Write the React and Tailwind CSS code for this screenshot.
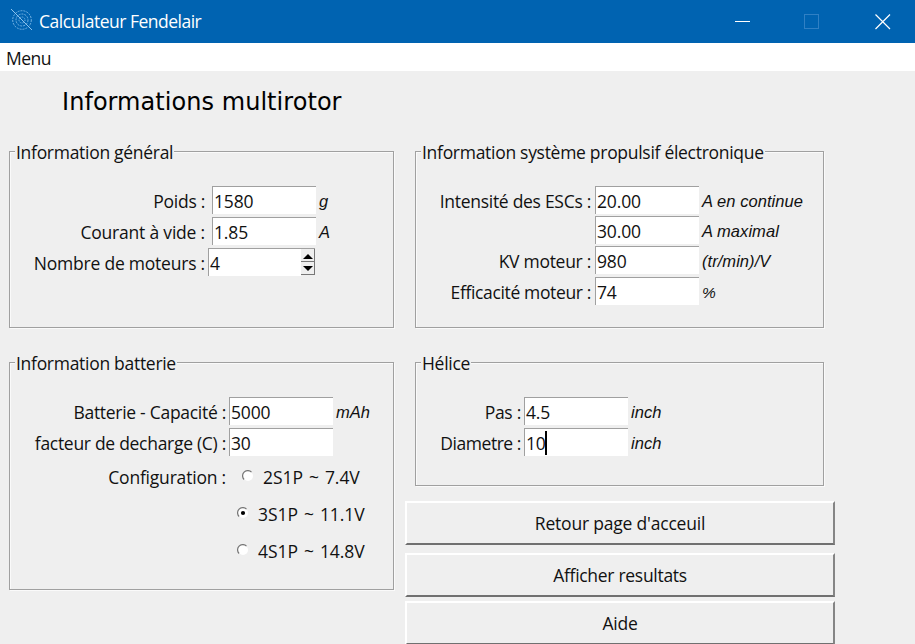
import React from "react";

function Panel({ title, className, children }) {
  return (
    <section className={`flex flex-col border border-[#a0a0a0] shadow-[1px_1px_0_#fafafa,inset_1px_1px_0_#fafafa] ${className}`}>
      <h2 className="-mt-[13px] ml-[5px] h-[26px] self-start whitespace-nowrap bg-[#efefef] px-px leading-[26px]">{title}</h2>
      {children}
    </section>
  );
}

function Label({ width, className = "", children }) {
  return <span className={`shrink-0 whitespace-nowrap text-right ${width} ${className}`}>{children}</span>;
}

function Entry({ value, caret, className = "w-[104px] ml-1" }) {
  return (
    <span className={`flex h-7 shrink-0 items-center border-l border-t border-[#a0a0a0] bg-white pl-[1px] text-[17.5px] tracking-[-0.15px] ${className}`}>
      <span className="pt-px">{value}</span>
      {caret && <i className="-ml-px h-6 w-[2px] bg-black" />}
    </span>
  );
}

function Unit({ children, className = "text-[16.5px]" }) {
  return <em className={`ml-[3px] whitespace-nowrap font-['Liberation_Sans',Arial,sans-serif] leading-[31px] tracking-[0.05px] ${className}`}>{children}</em>;
}

function Row({ height = "h-[31px]", children }) {
  return <div className={`flex items-start leading-[31px] ${height}`}>{children}</div>;
}

function Spinner() {
  return (
    <span className="ml-px flex h-7 w-[107px] items-center justify-between border-l border-t border-[#a0a0a0] bg-white pl-[1px] text-[17.5px]">
      <span className="pt-px">4</span>
      <span className="flex h-[27px] w-[14px] flex-col bg-[#efefef]">
        <b className="flex h-[13px] items-center justify-center border-b border-r border-[#777] pt-0.5">
          <svg width="10" height="5"><path d="M5 0 10 5H0z" /></svg>
        </b>
        <b className="flex h-[13px] items-center justify-center border-b border-r border-[#777]">
          <svg width="10" height="5"><path d="M0 0H10L5 5z" /></svg>
        </b>
      </span>
    </span>
  );
}

function Radio({ checked }) {
  return (
    <svg width="12" height="12" viewBox="0 0 12 12" className="-mt-[3px] shrink-0">
      <circle cx="6" cy="6" r="5" fill="#fff" />
      <path d="M2.1 9.5A5 5 0 0 1 9.5 2.1" fill="none" stroke="#777" strokeWidth="1.2" />
      {checked && <circle cx="6" cy="6" r="2.1" fill="#000" />}
    </svg>
  );
}

function Choice({ checked, className, children }) {
  return (
    <span className={`flex items-center ${className}`}>
      <Radio checked={checked} />
      <span className="tracking-[-0.05px] [word-spacing:1.5px]">{children}</span>
    </span>
  );
}

function Button({ children, className }) {
  return (
    <button className={`flex w-[430px] shrink-0 items-center justify-center border-2 border-b-[#707070] border-l-white border-r-[#858585] border-t-white bg-[#efefef] ${className}`}>
      {children}
    </button>
  );
}

export default function App() {
  return (
    <div className="flex h-[644px] w-[915px] flex-col overflow-hidden bg-[#efefef] font-['Open_Sans','Noto_Sans',sans-serif] text-[17.5px] tracking-[-0.29px] text-[#111]">
      <header className="flex h-[43px] shrink-0 items-center bg-[#0063b1] text-white">
        <svg width="22" height="22" viewBox="0 0 22 22" className="ml-[11px] mt-[-3px]" fill="none" stroke="#8fc4ee">
          <circle cx="11" cy="11" r="9.3" strokeWidth=".8" strokeDasharray="2 1" />
          <circle cx="11" cy="11" r="6" strokeWidth=".8" strokeDasharray="2 1" />
          <circle cx="11" cy="11" r="3" strokeWidth=".9" strokeDasharray="1 1" />
          <path d="M0 0 21 21" strokeWidth="1" />
        </svg>
        <span className="ml-[6px] flex-1 tracking-[-0.5px]">Calculateur Fendelair</span>
        <svg width="180" height="16" viewBox="0 0 180 16" fill="none">
          <path d="M0 7.5H15" stroke="#fff" />
          <rect x="69.5" y=".5" width="14" height="14" stroke="#3080c4" />
          <path d="M140.5 .5 155 15M155 .5 140.5 15" stroke="#fff" strokeWidth="1.2" />
        </svg>
      </header>
      <nav className="h-7 shrink-0 bg-white pl-[6px] leading-[31px] tracking-[-0.5px]">Menu</nav>
      <h1 className="h-[80px] shrink-0 pl-[62px] pt-[13px] font-['DejaVu_Sans',Verdana,sans-serif] text-[24px] leading-9 tracking-[0.05px] text-black">
        Informations multirotor
      </h1>
      <main className="flex">
        <div className="ml-[9px] flex w-[385px] flex-col gap-[34px]">
          <Panel title="Information général" className="h-[177px]">
            <div className="mt-[21px]">
              <Row><Label width="w-[195px]">Poids :</Label><Entry value="1580" className="ml-[7px] w-[104px]" /><Unit>g</Unit></Row>
              <Row><Label width="w-[195px]" className="tracking-[-0.2px]">Courant à vide :</Label><Entry value="1.85" className="ml-[7px] w-[104px]" /><Unit>A</Unit></Row>
              <Row><Label width="w-[195px]" className="tracking-[-0.22px]">Nombre de moteurs :</Label><span className="w-[2px]" /><Spinner /></Row>
            </div>
          </Panel>
          <Panel title="Information batterie" className="h-[228px]">
            <div className="mt-[21px]">
              <Row><Label width="w-[216px]">Batterie - Capacité :</Label><Entry value="5000" className="ml-[3px] w-[104px]" /><Unit>mAh</Unit></Row>
              <Row><Label width="w-[216px]">facteur de decharge (C) :</Label><Entry value="30" className="ml-[3px] w-[104px]" /></Row>
              <div className="flex h-[37px] items-center">
                <Label width="w-[216px]" className="tracking-[-0.2px]">Configuration :</Label>
                <Choice className="ml-[16px] gap-[9px]">2S1P ~ 7.4V</Choice>
              </div>
              <div className="flex h-[37px] items-center"><Choice checked className="ml-[227px] gap-[9px]">3S1P ~ 11.1V</Choice></div>
              <div className="flex h-[37px] items-center"><Choice className="ml-[227px] gap-[9px]">4S1P ~ 14.8V</Choice></div>
            </div>
          </Panel>
        </div>
        <div className="ml-[11px] flex w-[430px] flex-col">
          <Panel title="Information système propulsif électronique" className="ml-[10px] h-[177px] w-[409px]">
            <div className="mt-[21px]">
              <Row height="h-[30px]"><Label width="w-[175px]">Intensité des ESCs :</Label><Entry value="20.00" /><Unit>A en continue</Unit></Row>
              <Row height="h-[30px]"><Label width="w-[175px]" /><Entry value="30.00" /><Unit>A maximal</Unit></Row>
              <Row><Label width="w-[175px]">KV moteur :</Label><Entry value="980" /><Unit>(tr/min)/V</Unit></Row>
              <Row><Label width="w-[175px]" className="tracking-[-0.36px]">Efficacité moteur :</Label><Entry value="74" /><Unit className="text-[15.5px]">%</Unit></Row>
            </div>
          </Panel>
          <Panel title="Hélice" className="ml-[10px] mt-[34px] h-[124px] w-[409px]">
            <div className="mt-[21px]">
              <Row><Label width="w-[105px]">Pas :</Label><Entry value="4.5" className="ml-[3px] w-[104px]" /><Unit>inch</Unit></Row>
              <Row><Label width="w-[105px]" className="tracking-[-0.45px]">Diametre :</Label><Entry value="10" caret className="ml-[3px] w-[104px]" /><Unit>inch</Unit></Row>
            </div>
          </Panel>
          <Button className="mt-[15px] h-[44px] tracking-[-0.2px]">Retour page d'acceuil</Button>
          <Button className="mt-[8px] h-[44px]">Afficher resultats</Button>
          <Button className="mt-[4px] h-[44px]">Aide</Button>
        </div>
      </main>
    </div>
  );
}
